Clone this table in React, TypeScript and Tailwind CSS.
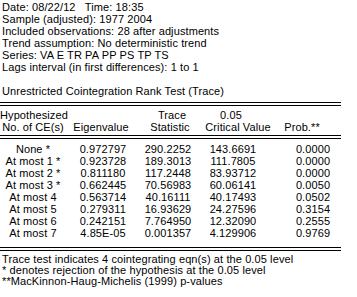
const info = [
  'Date: 08/22/12   Time: 18:35',
  'Sample (adjusted): 1977 2004',
  'Included observations: 28 after adjustments',
  'Trend assumption: No deterministic trend',
  'Series: VA E TR PA PP PS TP TS',
  'Lags interval (in first differences): 1 to 1',
];

const rows = [
  ['None *', '0.972797', '290.2252', '143.6691', '0.0000'],
  ['At most 1 *', '0.923728', '189.3013', '111.7805', '0.0000'],
  ['At most 2 *', '0.811180', '117.2448', '83.93712', '0.0000'],
  ['At most 3 *', '0.662445', '70.56983', '60.06141', '0.0050'],
  ['At most 4', '0.563714', '40.16111', '40.17493', '0.0502'],
  ['At most 5', '0.279311', '16.93629', '24.27596', '0.3154'],
  ['At most 6', '0.242151', '7.764950', '12.32090', '0.2555'],
  ['At most 7', '4.85E-05', '0.001357', '4.129906', '0.9769'],
];

const DoubleRule = ({ className }: { className?: string }) => (
  <div className={`h-[4px] w-[341px] border-y border-black ${className ?? ''}`} />
);

export default function App() {
  return (
    <div
      className="h-[297px] w-[357px] overflow-hidden bg-white text-[11px] leading-[12px] tracking-[0.1px] text-black"
      style={{ fontFamily: '"Liberation Sans", Arial, sans-serif' }}
    >
      <div className="pl-[2px] pt-[1px]">
        {info.map((line) => (
          <div key={line} className="whitespace-pre">
            {line}
          </div>
        ))}
        <div className="mt-[12px]">Unrestricted Cointegration Rank Test (Trace)</div>
      </div>

      <DoubleRule className="mt-[5px]" />

      <div className="mt-[3px]">
        <div className="grid grid-cols-[66px_70px_72px_46px] text-center">
          <div>Hypothesized</div>
          <div />
          <div>Trace</div>
          <div>0.05</div>
        </div>
        <div className="grid grid-cols-[66px_70px_68px_68px_60px] text-center">
          <div>No. of CE(s)</div>
          <div>Eigenvalue</div>
          <div>Statistic</div>
          <div>Critical Value</div>
          <div>Prob.**</div>
        </div>
      </div>

      <DoubleRule className="mt-[2px]" />

      <div className="mt-[4px]">
        {rows.map((r) => (
          <div key={r[0]} className="grid grid-cols-[66px_74px_56px_74px_86px] text-center">
            {r.map((c, i) => (
              <div key={i}>{c}</div>
            ))}
          </div>
        ))}
      </div>

      <DoubleRule className="mt-[8px]" />

      <div className="mt-[3px] pl-[2px] leading-[11px]">
        <div>Trace test indicates 4 cointegrating eqn(s) at the 0.05 level</div>
        <div>* denotes rejection of the hypothesis at the 0.05 level</div>
        <div>**MacKinnon-Haug-Michelis (1999) p-values</div>
      </div>
    </div>
  );
}
